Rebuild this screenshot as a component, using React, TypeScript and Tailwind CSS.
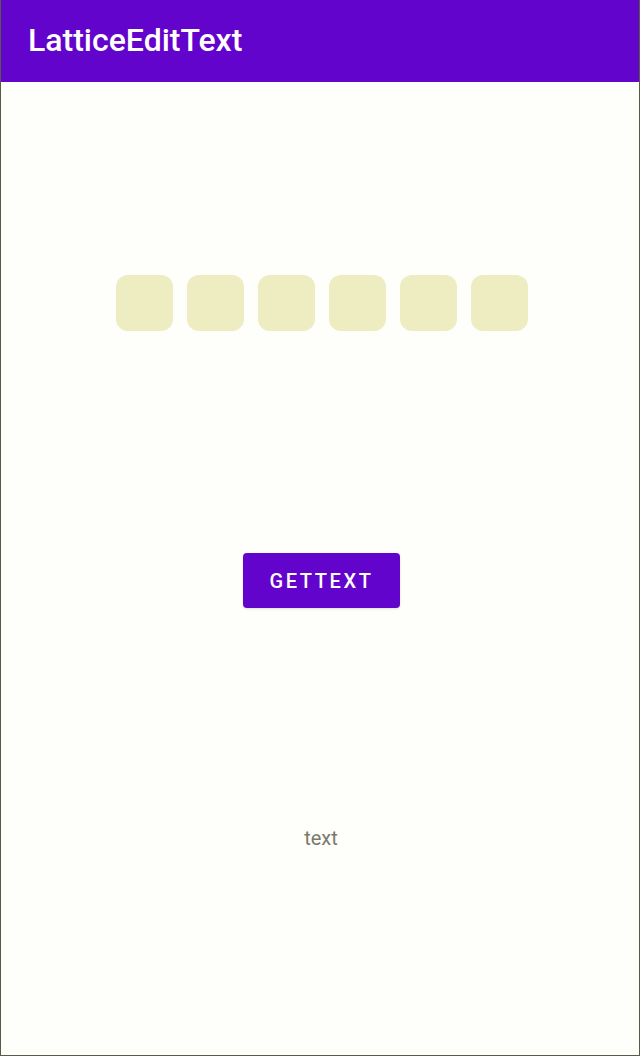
export default function App() {
  const cells = [0, 1, 2, 3, 4, 5];
  return (
    <div
      className="w-[640px] h-[1056px] flex flex-col bg-[#fefefa] border-l border-r border-b border-[#5a5a4a]"
      style={{ fontFamily: "Roboto, 'Liberation Sans', sans-serif" }}
    >
      <header className="h-[82px] shrink-0 bg-[#6304cc] flex items-center pl-[27px]">
        <h1 className="text-white text-[32px] font-medium leading-none pb-[2px]">LatticeEditText</h1>
      </header>

      <div className="flex flex-col items-center">
        <div className="flex gap-[14px] mt-[193px] ml-[3px]">
          {cells.map((i) => (
            <div key={i} className="w-[57px] h-[56px] rounded-[12px] bg-[#ededc1]" />
          ))}
        </div>

        <button className="mt-[222px] w-[157px] h-[55px] rounded-[4px] bg-[#6304cc] text-white text-[20px] font-medium tracking-[0.13em] shadow-sm ml-[3px]">
          GETTEXT
        </button>

        <p className="mt-[215px] text-[20px] text-[#7a7a6a] ml-[2px]">text</p>
      </div>
    </div>
  );
}
